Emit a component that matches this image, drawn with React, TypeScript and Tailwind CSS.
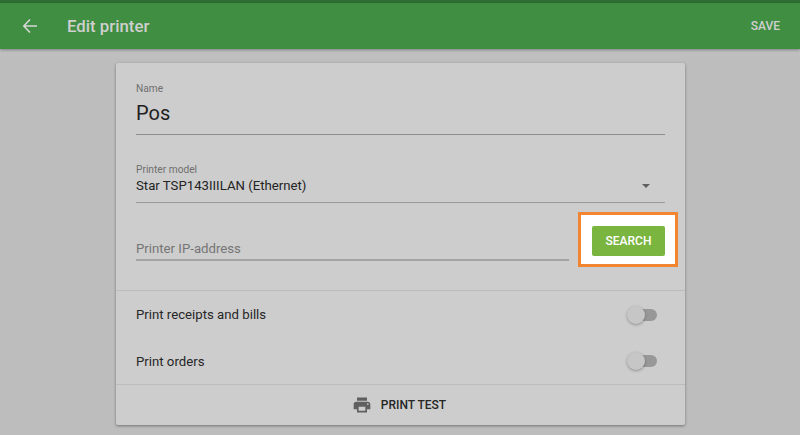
import React from "react";

function Toggle() {
  return (
    <div className="relative w-[30px] h-[18px] mr-[8px]">
      <div className="absolute right-0 top-[3px] w-[24px] h-[12px] rounded-full bg-[#989898]" />
      <div className="absolute left-0 top-0 w-[18px] h-[18px] rounded-full bg-[#c6c6c6] shadow-[0_1px_3px_rgba(0,0,0,0.3)]" />
    </div>
  );
}

export default function App() {
  return (
    <div className="w-[800px] h-[435px] overflow-hidden flex flex-col bg-[#bdbdbd] font-['Roboto',sans-serif]">
      <div className="h-[3px] bg-[#2f6f33] shrink-0" />
      <header className="h-[46px] shrink-0 bg-[#3f8e41] flex items-center pl-[22px] pr-[20px] shadow-[0_1px_3px_rgba(0,0,0,0.35)] relative z-10">
        <svg width="16" height="16" viewBox="0 0 16 16" fill="none" stroke="#d6d6d6" strokeWidth="1.6">
          <path d="M15 8H2M8 1.5 1.8 8 8 14.5" />
        </svg>
        <div className="ml-[29px] text-[16.8px] font-medium text-[#cfcfcf] leading-none">Edit printer</div>
        <div className="ml-auto text-[12px] font-medium text-[#cfcfcf]">SAVE</div>
      </header>
      <main className="flex-1 flex justify-center pt-[14px] bg-[linear-gradient(to_bottom,#c2c2c2,#bdbdbd_12px)]">
        <div className="w-[569px] h-[362px] ml-[1px] bg-[#cdcdcd] rounded-[2px] shadow-[0_1px_3px_rgba(0,0,0,0.4)] flex flex-col">
          <div className="h-[227px] px-[20px] flex flex-col shrink-0">
            <div className="pt-[19px] text-[10.2px] leading-[13px] text-[#6f6f6f]">Name</div>
            <div className="mt-[4px] text-[20px] leading-[28px] text-[#1f1f1f] pb-[7px] border-b border-[#8e8e8e]">Pos</div>
            <div className="mt-[28px] text-[10.2px] leading-[13px] text-[#6f6f6f]">Printer model</div>
            <div className="flex items-center justify-between border-b border-[#9a9a9a] h-[28px] pb-[6px] mt-[-1px]">
              <span className="text-[13.2px] text-[#232323]">Star TSP143IIILAN (Ethernet)</span>
              <span className="mr-[15px] w-0 h-0 border-x-[4px] border-x-transparent border-t-[4px] border-t-[#5f5f5f]" />
            </div>
            <div className="flex mt-[9px]">
              <div className="w-[433px] h-[49px] shrink-0 flex items-end border-b-2 border-[#a3a3a3]">
                <span className="text-[13.2px] leading-[18px] text-[#757575] pb-[1px]">Printer IP-address</span>
              </div>
              <div className="ml-[9px] w-[100px] h-[55px] border-[3px] border-[#f28532] bg-white pl-[11px] pt-[11px] shrink-0">
                <button className="w-[73px] h-[30px] bg-[#7ab53f] rounded-[2px] text-white text-[12px] font-medium">SEARCH</button>
              </div>
            </div>
          </div>
          <div className="border-t border-[#bcbcbc] flex-1 flex flex-col">
            <div className="h-[47px] px-[20px] flex items-center justify-between text-[13.2px] text-[#262626]">
              <span className="mt-[1px]">Print receipts and bills</span>
              <Toggle />
            </div>
            <div className="h-[46px] px-[20px] flex items-center justify-between text-[13.2px] text-[#262626]">
              <span className="mt-[1px]">Print orders</span>
              <Toggle />
            </div>
          </div>
          <div className="h-[41px] border-t border-[#bcbcbc] flex items-center justify-center shrink-0">
            <svg width="20" height="20" viewBox="0 0 24 24" fill="#5f5f5f" className="mr-[-1px]">
              <path d="M19 8H5c-1.66 0-3 1.34-3 3v6h4v4h12v-4h4v-6c0-1.66-1.34-3-3-3zm-3 11H8v-5h8v5zm3-7c-.55 0-1-.45-1-1s.45-1 1-1 1 .45 1 1-.45 1-1 1zm-1-9H6v4h12V3z" />
            </svg>
            <span className="ml-[10px] mr-[3px] text-[12px] font-medium text-[#262626]">PRINT TEST</span>
          </div>
        </div>
      </main>
    </div>
  );
}
